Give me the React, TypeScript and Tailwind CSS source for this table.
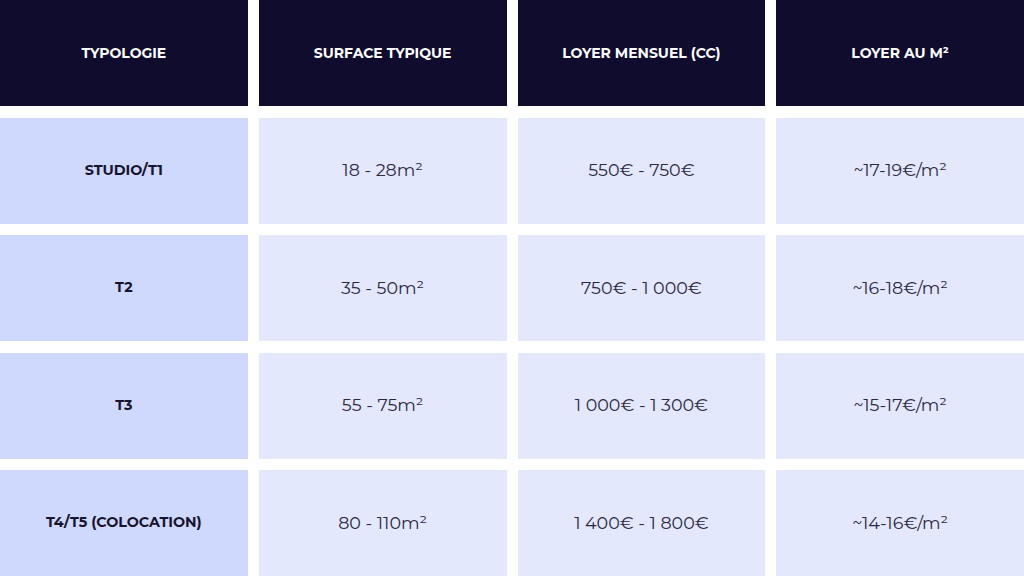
const HEADERS = ['Typologie', 'Surface typique', 'Loyer mensuel (CC)', 'Loyer au m²']

const ROWS = [
  ['Studio/T1', '18 - 28m²', '550€ - 750€', '~17-19€/m²'],
  ['T2', '35 - 50m²', '750€ - 1 000€', '~16-18€/m²'],
  ['T3', '55 - 75m²', '1 000€ - 1 300€', '~15-17€/m²'],
  ['T4/T5 (colocation)', '80 - 110m²', '1 400€ - 1 800€', '~14-16€/m²'],
]

export default function App() {
  return (
    <div
      className="w-[1024px] h-[576px] bg-white grid grid-cols-4 gap-x-[11px] gap-y-[11.5px] overflow-hidden"
      style={{ fontFamily: 'Montserrat, "Noto Sans", sans-serif' }}
    >
      {HEADERS.map((h) => (
        <div
          key={h}
          className="h-[106px] bg-[#0f0c2e] flex items-center justify-center pt-[1px] text-white text-[14px] font-bold uppercase"
        >
          {h}
        </div>
      ))}

      {ROWS.map((row) =>
        row.map((cell, i) =>
          i === 0 ? (
            <div
              key={row[0] + i}
              className="h-[106px] bg-[#cfd8fd] flex items-center justify-center text-[#16142f] text-[14.3px] font-bold uppercase"
            >
              {cell}
            </div>
          ) : (
            <div
              key={row[0] + i}
              className="h-[106px] bg-[#e3e8fd] flex items-center justify-center text-[#2a2944] text-[17.5px]"
            >
              {cell}
            </div>
          ),
        ),
      )}
    </div>
  )
}
